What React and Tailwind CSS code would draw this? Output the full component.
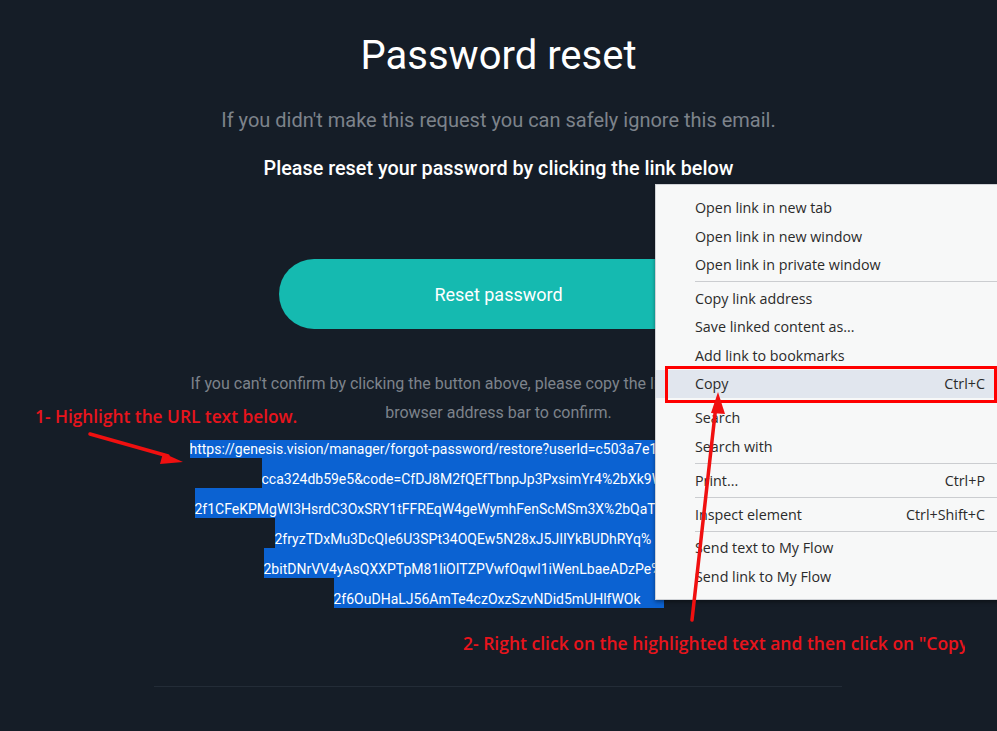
import React from "react";

function UrlRow({ w, text, first }) {
  return (
    <div className="flex justify-center">
      <div
        className={
          (first ? "h-[18px] " : "h-[30px] pt-[12px] ") +
          w +
          " overflow-hidden whitespace-nowrap bg-[#0b62d2] text-left text-[14px] leading-[18px] text-white"
        }
      >
        {text}
      </div>
    </div>
  );
}

function Item({ label, shortcut, active }) {
  return (
    <div
      className={
        "flex h-[28.5px] items-center justify-between pl-[39px] pr-[19px] " +
        (active ? "bg-[#e1e6ee]" : "")
      }
    >
      <span>{label}</span>
      {shortcut ? <span>{shortcut}</span> : null}
    </div>
  );
}

function Sep() {
  return <div className="my-[2.2px] ml-[39px] h-px bg-[#cbcdd0]" />;
}

export default function App() {
  return (
    <div className="relative h-[731px] w-full overflow-hidden bg-[#151d27] font-['Roboto',sans-serif]">
      <div className="flex flex-col items-center">
        <h1 className="mt-[32px] text-[40px] leading-[48px] font-normal text-white">
          Password reset
        </h1>
        <p className="mt-[26px] text-[20px] leading-[28px] text-[#7d838b]">
          If you didn't make this request you can safely ignore this email.
        </p>
        <p className="mt-[21px] text-[19.8px] leading-[28px] font-medium text-white">
          Please reset your password by clicking the link below
        </p>
        <div className="mt-[76px] flex h-[70px] w-[440px] items-center justify-center rounded-full bg-[#15bab0] text-[18px] text-white">
          Reset password
        </div>
        <div className="mt-[39.5px] w-[616px] text-[16px] leading-[29px] text-[#7d838b]">
          <div className="whitespace-nowrap text-left">
            If you can't confirm by clicking the button above, please copy the link below into your
          </div>
          <div className="text-center">browser address bar to confirm.</div>
        </div>
        <div className="mt-[13.5px] flex flex-col">
          <UrlRow
            first
            w="w-[618px]"
            text="https://genesis.vision/manager/forgot-password/restore?userId=c503a7e1-4b2f-4d9a-8e61-"
          />
          <UrlRow w="w-[474px]" text="cca324db59e5&code=CfDJ8M2fQEfTbnpJp3PxsimYr4%2bXk9Ws%" />
          <UrlRow w="w-[608px]" text="2f1CFeKPMgWI3HsrdC3OxSRY1tFFREqW4geWymhFenScMSm3X%2bQaTr7pLc%" />
          <UrlRow w="w-[448px]" text="2fryzTDxMu3DcQIe6U3SPt34OQEw5N28xJ5JIIYkBUDhRYq%" />
          <UrlRow w="w-[470px]" text="2bitDNrVV4yAsQXXPTpM81liOITZPVwfOqwl1iWenLbaeADzPe%" />
          <UrlRow w="w-[330px]" text="2f6OuDHaLJ56AmTe4czOxzSzvNDid5mUHlfWOk" />
        </div>
        <div className="mt-[78px] h-px w-[688px] -translate-x-[1px] bg-[#232c37]" />
      </div>

      <div className="absolute left-[35px] top-[405px] whitespace-nowrap font-['Open_Sans',sans-serif] text-[17.3px] leading-[24px] font-semibold text-[#e8141c]">
        1- Highlight the URL text below.
      </div>
      <div className="absolute left-[463px] top-[631px] w-[502px] overflow-hidden whitespace-nowrap font-['Open_Sans',sans-serif] text-[17.5px] leading-[24px] font-semibold text-[#e8141c]">
        2- Right click on the highlighted text and then click on "Copy"
      </div>

      <div className="absolute left-[655px] top-[184px] w-[350px] border border-[#cfd2d6] bg-[#f7f8f8] pt-[8.5px] pb-[8px] font-['Open_Sans',sans-serif] text-[14.3px] text-[#2b2b2b] shadow-[0_2px_4px_rgba(0,0,0,0.4)]">
        <Item label="Open link in new tab" />
        <Item label="Open link in new window" />
        <Item label="Open link in private window" />
        <Sep />
        <Item label="Copy link address" />
        <Item label="Save linked content as..." />
        <Item label="Add link to bookmarks" />
        <Item label="Copy" shortcut="Ctrl+C" active />
        <Sep />
        <Item label="Search" />
        <Item label="Search with" />
        <Sep />
        <Item label="Print..." shortcut="Ctrl+P" />
        <Sep />
        <Item label="Inspect element" shortcut="Ctrl+Shift+C" />
        <Sep />
        <Item label="Send text to My Flow" />
        <Item label="Send link to My Flow" />
      </div>

      <div className="absolute left-[665px] top-[366px] h-[37px] w-[332px] border-[3px] border-[#ff0000]" />

      <svg className="pointer-events-none absolute left-0 top-0" width="997" height="731">
        <line x1="90" y1="434" x2="168" y2="456" stroke="#f01010" strokeWidth="3.5" strokeLinecap="round" />
        <polygon points="183,462 163,453 160,464" fill="#f01010" />
        <line x1="692" y1="620" x2="716" y2="405" stroke="#f01010" strokeWidth="3.5" strokeLinecap="round" />
        <polygon points="718,392 711,413 725,414" fill="#f01010" />
      </svg>
    </div>
  );
}
